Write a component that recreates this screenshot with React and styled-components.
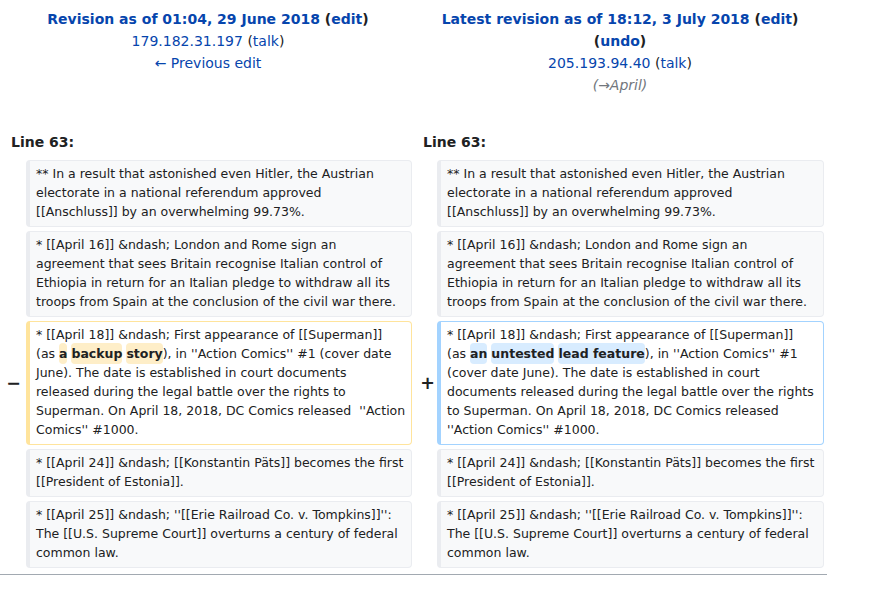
import React from "react";
import styled, { createGlobalStyle } from "styled-components";

const Global = createGlobalStyle`
  html, body { margin: 0; padding: 0; background: #fff; }
  body { font-family: "DejaVu Sans", sans-serif; color: #202122; }
`;

const Page = styled.div`
  width: 828px;
`;

const DiffGrid = styled.div`
  display: grid;
  grid-template-columns: 18px 386px 17px 387px;
  column-gap: 4px;
  row-gap: 4px;
  padding: 4px;
`;

const Title = styled.div`
  grid-column: span 2;
  text-align: center;
  font-size: 14px;
  line-height: 22px;
  padding: 4px 7px 4px;
`;

const TitleLine = styled.div`
  font-weight: ${(p) => (p.$bold ? "bold" : "normal")};
`;

const Link = styled.a`
  color: #0645ad;
  text-decoration: none;
  cursor: pointer;
`;

const Comment = styled.span`
  color: #72777d;
  font-style: italic;
`;

const LineNo = styled.div`
  grid-column: span 2;
  font-size: 14px;
  font-weight: bold;
  line-height: 22px;
  padding: 4px 7px 3px;
  margin-top: 23px;
`;

const Marker = styled.div`
  display: flex;
  align-items: center;
  justify-content: flex-end;
  font-weight: bold;
  font-size: 17.5px;
  line-height: 1.2;
  margin-right: ${(p) => p.$shift || 0}px;
`;

const borderColors = {
  context: "#eaecf0",
  deleted: "#ffe49c",
  added: "#a3d3ff",
};

const Cell = styled.div`
  font-size: 12.5px;
  line-height: 19px;
  white-space: pre-wrap;
  word-wrap: break-word;
  padding: 3px 2px 5px 6px;
  border-style: solid;
  border-width: 1px 1px 1px 4px;
  border-radius: 4px;
  border-color: ${(p) => borderColors[p.$kind]};
  background: ${(p) => (p.$kind === "context" ? "#f8f9fa" : "#fff")};
`;

const Change = styled.span`
  font-weight: bold;
  border-radius: 4px;
  padding: 3px 0;
  background: ${(p) => (p.$kind === "added" ? "#d8ecff" : "#feeec8")};
`;

const Divider = styled.div`
  width: 827px;
  margin-top: 2px;
  border-top: 1px solid #a2a9b1;
`;

const contextRows = [
  [
    "** In a result that astonished even Hitler, the Austrian",
    "electorate in a national referendum approved",
    "[[Anschluss]] by an overwhelming 99.73%.",
  ],
  [
    "* [[April 16]] &ndash; London and Rome sign an",
    "agreement that sees Britain recognise Italian control of",
    "Ethiopia in return for an Italian pledge to withdraw all its",
    "troops from Spain at the conclusion of the civil war there.",
  ],
];

const contextAfter = [
  [
    "* [[April 24]] &ndash; [[Konstantin Päts]] becomes the first",
    "[[President of Estonia]].",
  ],
  [
    "* [[April 25]] &ndash; ''[[Erie Railroad Co. v. Tompkins]]'':",
    "The [[U.S. Supreme Court]] overturns a century of federal",
    "common law.",
  ],
];

function ContextRow({ lines }) {
  const text = lines.join("\n");
  return (
    <>
      <Marker />
      <Cell $kind="context">{text}</Cell>
      <Marker />
      <Cell $kind="context">{text}</Cell>
    </>
  );
}

export default function App() {
  return (
    <Page>
      <Global />
      <DiffGrid>
        <Title>
          <TitleLine $bold>
            <Link>Revision as of 01:04, 29 June 2018</Link> (<Link>edit</Link>)
          </TitleLine>
          <TitleLine>
            <Link>179.182.31.197</Link> (<Link>talk</Link>)
          </TitleLine>
          <TitleLine>
            <Link>← Previous edit</Link>
          </TitleLine>
        </Title>
        <Title>
          <TitleLine $bold>
            <Link>Latest revision as of 18:12, 3 July 2018</Link> (<Link>edit</Link>) (<Link>undo</Link>)
          </TitleLine>
          <TitleLine>
            <Link>205.193.94.40</Link> (<Link>talk</Link>)
          </TitleLine>
          <TitleLine>
            <Comment>(→April)</Comment>
          </TitleLine>
        </Title>

        <LineNo>Line 63:</LineNo>
        <LineNo>Line 63:</LineNo>

        {contextRows.map((l, i) => (
          <ContextRow key={"a" + i} lines={l} />
        ))}

        <Marker $shift={1}>−</Marker>
        <Cell $kind="deleted">
          {"* [[April 18]] &ndash; First appearance of [[Superman]]\n(as "}
          <Change $kind="deleted">a</Change> <Change $kind="deleted">backup</Change>{" "}
          <Change $kind="deleted">story</Change>
          {"), in ''Action Comics'' #1 (cover date\nJune). The date is established in court documents\nreleased during the legal battle over the rights to\nSuperman. On April 18, 2018, DC Comics released  ''Action\nComics'' #1000."}
        </Cell>
        <Marker $shift={-2}>+</Marker>
        <Cell $kind="added">
          {"* [[April 18]] &ndash; First appearance of [[Superman]]\n(as "}
          <Change $kind="added">an</Change> <Change $kind="added">untested</Change>{" "}
          <Change $kind="added">lead feature</Change>
          {"), in ''Action Comics'' #1\n(cover date June). The date is established in court\ndocuments released during the legal battle over the rights\nto Superman. On April 18, 2018, DC Comics released\n''Action Comics'' #1000."}
        </Cell>

        {contextAfter.map((l, i) => (
          <ContextRow key={"b" + i} lines={l} />
        ))}
      </DiffGrid>
      <Divider />
    </Page>
  );
}
